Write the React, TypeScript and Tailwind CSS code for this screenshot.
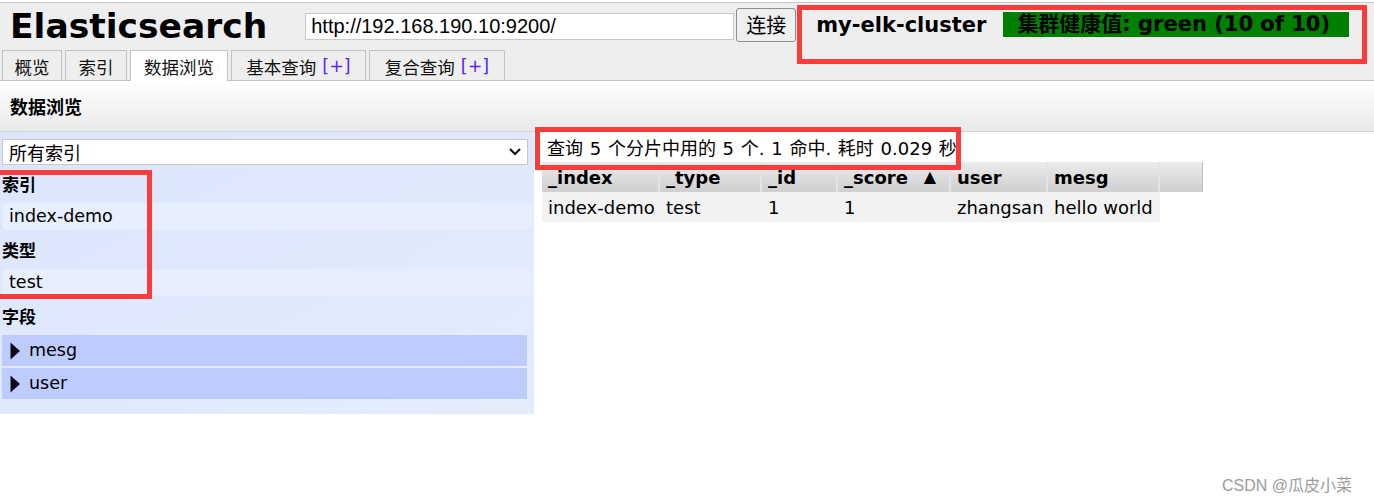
import React from "react";

const latin = '"DejaVu Sans", "Noto Sans CJK SC", sans-serif';
const cjk = '"Noto Sans CJK SC", sans-serif';

function Tab({ label, plus, active, w }: { label: string; plus?: boolean; active?: boolean; w: string }) {
  return (
    <div
      className={`${w} flex items-center justify-center border border-b-0 border-[#c3c3c3] text-[17.5px] text-[#111] ${
        active ? "h-[31px] -mb-px bg-white" : "h-[30px] bg-[#eeeeee]"
      }`}
      style={{ fontFamily: cjk }}
    >
      <span className="leading-none pt-[2px]">{label}</span>
      {plus && (
        <span className="ml-[6px] leading-none pt-[3px] text-[#5a22ff]" style={{ fontFamily: '"DejaVu Sans", sans-serif' }}>
          [+]
        </span>
      )}
    </div>
  );
}

function Triangle() {
  return (
    <svg width="11" height="18" viewBox="0 0 11 18" className="shrink-0">
      <polygon points="0.5,0.5 10,9 0.5,17.5" fill="#0d0a1e" />
    </svg>
  );
}

const cols = [
  { k: "_index", w: "w-[118px]", v: "index-demo" },
  { k: "_type", w: "w-[102px]", v: "test" },
  { k: "_id", w: "w-[76px]", v: "1" },
  { k: "_score", w: "w-[113px]", v: "1", arrow: true },
  { k: "user", w: "w-[97px]", v: "zhangsan" },
  { k: "mesg", w: "w-[112px]", v: "hello world" },
];

export default function App() {
  return (
    <div className="relative w-[1374px] h-[504px] overflow-hidden bg-white text-black" style={{ fontFamily: latin }}>
      {/* header */}
      <div className="mt-[2px] border-t border-[#c9c9c9] bg-[#eeeeee] border-b border-b-[#c3c3c3]">
        <div className="flex h-[47px] items-start">
          <div className="ml-[10px] mt-[3px] text-[34.5px] font-bold leading-[40px]">Elasticsearch</div>
          <div
            className="ml-[38px] mt-[10px] h-[27px] w-[429px] border border-[#c8c8c8] bg-white pl-[5px] text-[20px] leading-[25px]"
            style={{ fontFamily: '"Liberation Sans", Arial, sans-serif' }}
          >
            http://192.168.190.10:9200/
          </div>
          <div
            className="ml-[2px] mt-[5px] flex h-[34px] w-[60px] items-center justify-center rounded-[3px] border border-[#8f8f8f] bg-[#efefef] text-[20px]"
            style={{ fontFamily: cjk }}
          >
            连接
          </div>
          <div className="ml-[20px] mt-[8px] text-[21px] font-bold leading-[28px]">my-elk-cluster</div>
          <div className="ml-[17px] mt-[9px] flex h-[25px] w-[346px] items-center bg-[#008000] pl-[14px] text-[21px] font-bold leading-none">
            集群健康值: green (10 of 10)
          </div>
        </div>
        <div className="flex items-end gap-[3px] pl-[2px]">
          <Tab label="概览" w="w-[60px]" />
          <Tab label="索引" w="w-[62px]" />
          <Tab label="数据浏览" w="w-[98px]" active />
          <Tab label="基本查询" plus w="w-[135px]" />
          <Tab label="复合查询" plus w="w-[136px]" />
        </div>
      </div>

      {/* section header */}
      <div className="flex h-[51px] items-center border-b border-[#d3d3d3] bg-gradient-to-b from-white to-[#eaeaea] pl-[10px] pt-[1px]">
        <span className="text-[18px] font-bold" style={{ fontFamily: cjk }}>数据浏览</span>
      </div>

      {/* body */}
      <div className="flex">
        <div className="w-[534px] h-[282px] bg-gradient-to-br from-[#dbe5fc] to-[#e5edfd] pt-[7px]">
          <div className="mx-[2px] flex h-[26px] w-[526px] items-center justify-between border border-[#c9c9c9] bg-white pl-[6px] pr-[5px]">
            <span className="text-[18px] leading-none" style={{ fontFamily: cjk }}>所有索引</span>
            <svg width="14" height="10" viewBox="0 0 14 10">
              <polyline points="2,2 7,7 12,2" fill="none" stroke="#111" strokeWidth="2.2" />
            </svg>
          </div>
          <div className="flex h-[38px] items-center pl-[2px] text-[17px] font-bold" style={{ fontFamily: cjk }}>索引</div>
          <div className="mx-[2px] flex h-[27px] items-center rounded-[5px] bg-[#e7eefd] pl-[7px] text-[17.5px]">index-demo</div>
          <div className="flex h-[39px] items-center pl-[2px] text-[17px] font-bold" style={{ fontFamily: cjk }}>类型</div>
          <div className="mx-[2px] flex h-[27px] items-center rounded-[5px] bg-[#e7eefd] pl-[7px] text-[17.5px]">test</div>
          <div className="flex h-[39px] items-center pl-[2px] text-[17px] font-bold" style={{ fontFamily: cjk }}>字段</div>
          <div className="flex w-[529px] flex-col gap-[2px] px-[2px]">
            <div className="flex h-[31px] items-center gap-[8px] bg-[#bdcbfd] pl-[8px] text-[17.5px]">
              <Triangle />
              <span>mesg</span>
            </div>
            <div className="flex h-[31px] items-center gap-[8px] bg-[#bdcbfd] pl-[8px] text-[17.5px]">
              <Triangle />
              <span>user</span>
            </div>
          </div>
        </div>

        <div className="pl-[8px]">
          <div className="h-[30px] pl-[5px] pt-[4px] text-[18px] leading-[26px] [word-spacing:1px]">查询 5 个分片中用的 5 个. 1 命中. 耗时 0.029 秒</div>
          <div className="flex">
            {cols.map((c) => (
              <div
                key={c.k}
                className={`${c.w} flex h-[30px] items-center border-r-2 border-[#e4e4e4] bg-gradient-to-b from-[#ececec] to-[#cfcfcf] pl-[6px] text-[18px] font-bold`}
              >
                {c.k}
                {c.arrow && <span className="ml-[16px] text-[16px]">▲</span>}
              </div>
            ))}
            <div className="w-[43px] h-[30px] border-r border-[#bfbfbf] bg-gradient-to-b from-[#ececec] to-[#cfcfcf]" />
          </div>
          <div className="flex">
            {cols.map((c) => (
              <div key={c.k} className={`${c.w} flex h-[30px] items-center bg-[#f2f2f2] pl-[6px] text-[18px]`}>
                {c.v}
              </div>
            ))}
          </div>
        </div>
      </div>

      {/* annotation boxes */}
      <div className="pointer-events-none absolute left-[797px] top-[5px] h-[59px] w-[570px] border-[5px] border-[#fc3b3b]" />
      <div className="pointer-events-none absolute left-[-6px] top-[170px] h-[129px] w-[158px] border-[5px] border-[#fc3b3b]" />
      <div className="pointer-events-none absolute left-[535px] top-[127px] h-[43px] w-[426px] border-[5px] border-[#fc3b3b]" />

      {/* watermark */}
      <div
        className="absolute left-[1222px] top-[474px] text-[16px] text-[#9c9c9c]"
        style={{ fontFamily: '"Liberation Sans", "Noto Sans CJK SC", sans-serif' }}
      >
        CSDN @瓜皮小菜
      </div>
    </div>
  );
}
